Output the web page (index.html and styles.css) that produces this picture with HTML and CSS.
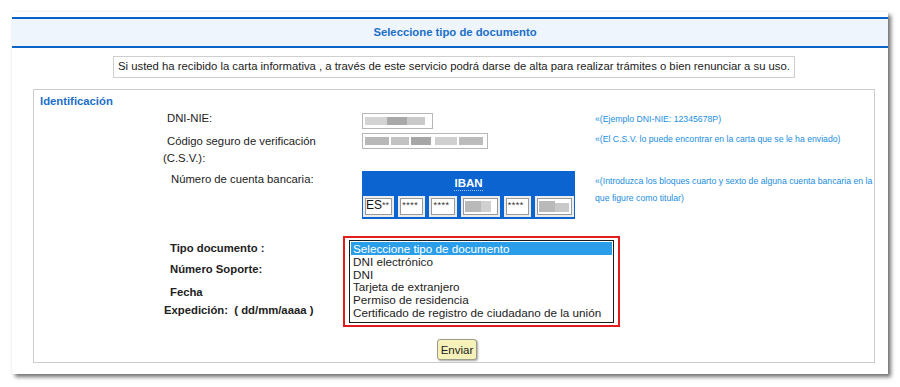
FILE: index.html
```html
<!DOCTYPE html>
<html lang="es">
<head>
<meta charset="utf-8">
<title>Seleccione tipo de documento</title>
<link rel="stylesheet" href="styles.css">
</head>
<body>
<div class="panel">
  <div class="header">Seleccione tipo de documento</div>
  <div class="info-wrap">
    <div class="info">Si usted ha recibido la carta informativa , a través de este servicio podrá darse de alta para realizar trámites o bien renunciar a su uso.</div>
  </div>
  <div class="fieldset">
    <div class="legend">Identificación</div>
    <div class="row row-dni">
      <div class="label l-dni">DNI-NIE:</div>
      <div class="field"><span class="input blur in-dni"><i class="px p1"></i><i class="px p2"></i><i class="px p3"></i></span></div>
      <div class="help">«(Ejemplo DNI-NIE: 12345678P)</div>
    </div>
    <div class="row row-csv">
      <div class="label l-csv"><span class="l1">Código seguro de verificación</span><span class="l2">(C.S.V.):</span></div>
      <div class="field"><span class="input blur in-csv"><i class="px p1"></i><i class="px p2"></i><i class="px p3"></i><i class="px p4"></i><i class="px p5"></i></span></div>
      <div class="help">«(El C.S.V. lo puede encontrar en la carta que se le ha enviado)</div>
    </div>
    <div class="row row-iban">
      <div class="label l-iban">Número de cuenta bancaria:</div>
      <div class="field">
        <div class="iban">
          <div class="iban-head"><span class="iban-title">IBAN</span></div>
          <div class="iban-row">
            <span class="ib ib-es">ES<small class="stars">**</small></span>
            <span class="ib ib-s">****</span>
            <span class="ib ib-s">****</span>
            <span class="ib ib-b blur"><i class="px q1"></i><i class="px q2"></i></span>
            <span class="ib ib-s">****</span>
            <span class="ib ib-b blur"><i class="px q1"></i><i class="px q3"></i></span>
          </div>
        </div>
      </div>
      <div class="help help-iban">«(Introduzca los bloques cuarto y sexto de alguna cuenta bancaria en la que figure como titular)</div>
    </div>
    <div class="row row-doc">
      <div class="doc-labels">
        <div class="dl dl-tipo">Tipo documento :</div>
        <div class="dl dl-num">Número Soporte:</div>
        <div class="dl dl-fecha">Fecha</div>
        <div class="dl dl-exp">Expedición:&nbsp; ( dd/mm/aaaa )</div>
      </div>
      <div class="select-frame">
        <div class="listbox">
          <div class="opt selected">Seleccione tipo de documento</div>
          <div class="opt">DNI electrónico</div>
          <div class="opt">DNI</div>
          <div class="opt">Tarjeta de extranjero</div>
          <div class="opt">Permiso de residencia</div>
          <div class="opt">Certificado de registro de ciudadano de la unión</div>
        </div>
      </div>
    </div>
    <div class="actions"><button class="btn" type="button">Enviar</button></div>
  </div>
</div>
</body>
</html>
```
FILE: styles.css
```css
* { box-sizing: border-box; }
html, body { margin: 0; padding: 0; background: #ffffff; }
body {
  font-family: "Liberation Sans", Arial, sans-serif;
  font-size: 11.3px;
  color: #222;
  width: 900px;
  height: 387px;
  overflow: hidden;
}
.panel {
  margin: 12px 0 0 12px;
  width: 876px;
  height: 362px;
  background: #fff;
  box-shadow: 3px 3px 4px rgba(0,0,0,0.55), 0 0 2px rgba(0,0,0,0.08);
  padding-top: 5px;
}
.header {
  border-top: 2px solid #0b63c9;
  border-bottom: 2px solid #0b63c9;
  background: #eef5fd;
  height: 31px;
  line-height: 27px;
  text-align: center;
  font-weight: bold;
  color: #1b6fc8;
  padding-left: 10px;
}
.info-wrap {
  display: flex;
  justify-content: center;
  padding-top: 8px;
  padding-left: 8px;
}
.info {
  border: 1px solid #cfcfcf;
  padding: 2px 4px 3px;
  line-height: 15px;
  color: #222;
  white-space: nowrap;
}
.fieldset {
  margin: 11px 0 0 21px;
  width: 842px;
  height: 274px;
  border: 1px solid #cccccc;
}
.legend {
  font-weight: bold;
  color: #1b6fc8;
  padding: 4px 0 0 6px;
  line-height: 14px;
}
.row {
  display: grid;
  grid-template-columns: 328px 233px 1fr;
}
.label { color: #222; }
.field { display: flex; align-items: flex-start; }
.help {
  font-size: 8.7px;
  color: #1a8ee0;
  line-height: 17px;
}
.row-dni { height: 23px; padding-top: 3px; }
.l-dni { padding: 1px 0 0 133px; }
.input {
  display: inline-block;
  height: 16px;
  border: 1px solid #b7b7b7;
  background: #fff;
  position: relative;
}
.in-dni { width: 71px; margin-top: 2px; }
.in-csv { width: 126px; margin-top: 0; }
.blur { overflow: hidden; }
.px { position: absolute; display: block; height: 8px; top: 3px; background: #c4c4c4; }
.in-dni .p1 { left: 2px; width: 22px; background: #d3d3d3; }
.in-dni .p2 { left: 24px; width: 20px; background: #a9a9a9; }
.in-dni .p3 { left: 44px; width: 18px; background: #c9c9c9; }
.in-csv .p1 { left: 2px; width: 24px; background: #b8b8b8; }
.in-csv .p2 { left: 28px; width: 18px; background: #c2c2c2; }
.in-csv .p3 { left: 48px; width: 20px; background: #a6a6a6; }
.in-csv .p4 { left: 72px; width: 22px; background: #cfcfcf; }
.in-csv .p5 { left: 96px; width: 24px; background: #bcbcbc; }
.row-csv { height: 40px; padding-top: 2px; }
.row-csv .help { margin-top: -2px; }
.l-csv { padding-left: 133px; line-height: 17px; display: flex; flex-direction: column; }
.l-csv .l2 { margin-left: -4px; }
.row-iban { height: 65px; }
.l-iban { padding: 2px 0 0 137px; }
.iban {
  width: 213px;
  height: 48px;
  background: #0b64cf;
  padding: 1px 1px 0;
}
.iban-head {
  height: 24px;
  text-align: center;
  color: #fff;
  font-weight: bold;
  font-size: 11.5px;
  line-height: 22px;
}
.iban-title { border-bottom: 1px dotted #9ec3ee; padding-bottom: 1px; }
.iban-row { display: flex; gap: 4px; }
.ib {
  height: 21px;
  border: 2px solid #ececec;
  outline: 1px solid #9a9a9a;
  outline-offset: -3px;
  background: #fff;
  font-size: 9px;
  line-height: 15px;
  padding-left: 2px;
  position: relative;
  color: #333;
}
.ib-es { width: 32px; font-size: 12px; padding-left: 1px; color: #111; }
.stars { font-size: 9px; vertical-align: top; color: #444; }
.ib-s { width: 28px; letter-spacing: 0.5px; }
.ib-b { width: 40px; }
.q1 { left: 2px; width: 16px; top: 3px; height: 11px; background: #b9b9b9; }
.q2 { left: 18px; width: 10px; top: 3px; height: 11px; background: #d0d0d0; }
.q3 { left: 18px; width: 14px; top: 5px; height: 9px; background: #c9c9c9; }
.help-iban { padding-top: 2px; line-height: 17px; }
.row-doc {
  display: flex;
  height: 91px;
}
.doc-labels {
  width: 309px;
  font-weight: bold;
  padding-top: 5px;
}
.dl { line-height: 14px; }
.dl-tipo { padding-left: 136px; }
.dl-num { padding-left: 136px; margin-top: 7px; }
.dl-fecha { padding-left: 136px; margin-top: 9px; }
.dl-exp { padding-left: 130px; margin-top: 4px; }
.select-frame {
  border: 2px solid #e21b1b;
  width: 277px;
  height: 91px;
  padding: 2px 4px 2px 4px;
}
.listbox {
  border: 1px solid #1a1a1a;
  height: 83px;
  padding: 1px 1px;
  background: #fff;
}
.opt {
  height: 12.8px;
  line-height: 13px;
  font-size: 11.7px;
  padding-left: 2px;
  color: #222;
  white-space: nowrap;
}
.opt.selected { background: #2a9ee8; color: #fff; }
.actions {
  display: flex;
  justify-content: center;
  margin-left: 6px;
}
.btn {
  font-family: "Liberation Sans", Arial, sans-serif;
  font-size: 11.5px;
  color: #222;
  background: #f6f1b8;
  border: 1px solid #9d9d8e;
  border-radius: 3px;
  box-shadow: 1px 1px 2px rgba(0,0,0,0.35);
  height: 21px;
  padding: 0 3px;
  margin-top: 12px;
}
```
